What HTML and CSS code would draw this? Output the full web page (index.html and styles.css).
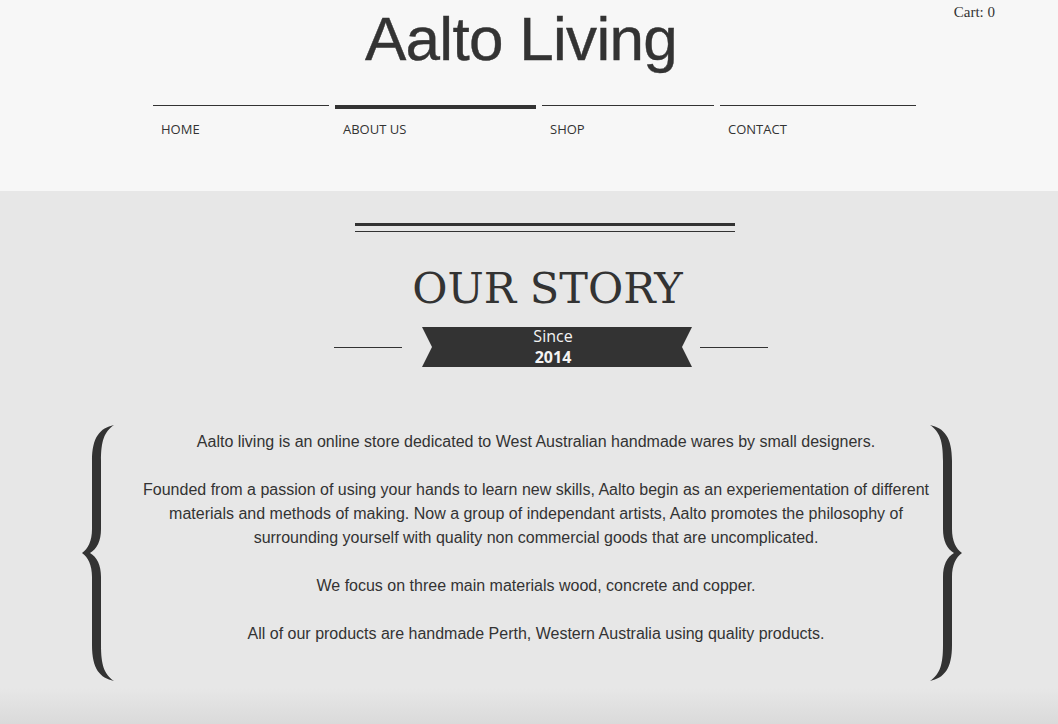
FILE: index.html
```html
<!DOCTYPE html>
<html lang="en">
<head>
<meta charset="utf-8">
<title>Aalto Living – Our Story</title>
<link rel="stylesheet" href="styles.css">
</head>
<body>
<header class="site-header">
  <div class="cart">Cart: 0</div>
  <h1 class="brand">Aalto Living</h1>
  <nav class="main-nav">
    <a class="nav-item nav-home" href="#">HOME</a>
    <a class="nav-item nav-about is-active" href="#">ABOUT US</a>
    <a class="nav-item nav-shop" href="#">SHOP</a>
    <a class="nav-item nav-contact" href="#">CONTACT</a>
  </nav>
</header>
<main class="story">
  <div class="double-rule"></div>
  <h2 class="story-title">OUR STORY</h2>
  <div class="ribbon-row">
    <span class="side-line"></span>
    <div class="ribbon">
      <span class="ribbon-since">Since</span>
      <span class="ribbon-year">2014</span>
    </div>
    <span class="side-line side-line-right"></span>
  </div>
  <div class="story-body">
    <svg class="brace" width="32" height="256" viewBox="0 0 32 256" aria-hidden="true">
      <path d="M32 0 C18 3 10 12 10 36 L10 104 C10 116 6 124 0 128 C6 132 10 140 10 152 L10 220 C10 244 18 253 32 256 C22 249 19 240 19 220 L19 152 C19 140 15 132 8 128 C15 124 19 116 19 104 L19 36 C19 16 22 7 32 0 Z" fill="#333"/>
    </svg>
    <div class="story-text">
      <p>Aalto living is an online store dedicated to West Australian handmade wares by small designers.</p>
      <p>Founded from a passion of using your hands to learn new skills, Aalto begin as an experiementation of different materials and methods of making. Now a group of independant artists, Aalto promotes the philosophy of surrounding yourself with quality non commercial goods that are uncomplicated.</p>
      <p>We focus on three main materials wood, concrete and copper.</p>
      <p>All of our products are handmade Perth, Western Australia using quality products.</p>
    </div>
    <svg class="brace brace-right" width="32" height="256" viewBox="0 0 32 256" aria-hidden="true">
      <g transform="translate(32 0) scale(-1 1)">
        <path d="M32 0 C18 3 10 12 10 36 L10 104 C10 116 6 124 0 128 C6 132 10 140 10 152 L10 220 C10 244 18 253 32 256 C22 249 19 240 19 220 L19 152 C19 140 15 132 8 128 C15 124 19 116 19 104 L19 36 C19 16 22 7 32 0 Z" fill="#333"/>
      </g>
    </svg>
  </div>
</main>
</body>
</html>
```
FILE: styles.css
```css
* { box-sizing: border-box; }

html, body {
  margin: 0;
  padding: 0;
}

body {
  background: #e7e7e7;
  color: #333;
  font-family: "Liberation Sans", Arial, sans-serif;
}

.site-header {
  position: relative;
  height: 191px;
  background: #f7f7f7;
  padding-top: 7px;
}

.cart {
  position: absolute;
  top: 5px;
  right: 63px;
  font-family: "Liberation Serif", "Times New Roman", serif;
  font-size: 15px;
  line-height: 15px;
  color: #333;
}

.brand {
  margin: 0 16px 0 0;
  height: 64px;
  text-align: center;
  font-family: "Liberation Sans", Arial, sans-serif;
  font-weight: normal;
  font-size: 62px;
  line-height: 64px;
  letter-spacing: -0.7px;
  color: #333;
  -webkit-text-stroke: 0.4px #333;
}

.main-nav {
  display: grid;
  grid-template-columns: 176px 201px 172px 196px;
  column-gap: 6px;
  margin-top: 34px;
  padding-left: 153px;
}

.nav-item {
  display: block;
  border-top: 1px solid #333;
  padding: 14px 0 0 8px;
  font-family: "Open Sans", sans-serif;
  font-size: 13px;
  line-height: 18px;
  color: #333;
  text-decoration: none;
}

.nav-item.is-active {
  border-top-width: 4px;
  padding-top: 11px;
}

.story {
  min-height: 533px;
  padding-top: 32px;
  background: linear-gradient(to bottom, #e7e7e7 0, #e7e7e7 calc(100% - 36px), #dadada 100%);
}

.double-rule {
  width: 380px;
  height: 9px;
  margin-left: 355px;
  border-top: 3px solid #333;
  border-bottom: 1px solid #333;
}

.story-title {
  margin: 34px 0 0 0;
  padding-left: 37px;
  text-align: center;
  font-family: "DejaVu Serif", serif;
  font-weight: normal;
  font-size: 43px;
  line-height: 44px;
  color: #333;
}

.ribbon-row {
  display: flex;
  align-items: center;
  margin-top: 17px;
  padding-left: 334px;
}

.side-line {
  width: 68px;
  height: 1px;
  background: #333;
  margin-right: 20px;
}

.side-line-right {
  margin-right: 0;
  margin-left: 8px;
}

.ribbon {
  width: 270px;
  height: 40px;
  background: #333;
  clip-path: polygon(0 0, 100% 0, calc(100% - 10px) 50%, 100% 100%, 0 100%, 10px 50%);
  display: flex;
  flex-direction: column;
  align-items: center;
  justify-content: center;
  padding-right: 8px;
  font-family: "Open Sans", sans-serif;
  font-size: 16px;
  line-height: 21px;
  color: #f4f4f4;
}

.ribbon-year {
  font-weight: bold;
}

.story-body {
  display: flex;
  align-items: flex-start;
  margin-top: 58px;
  padding-left: 82px;
}

.brace {
  flex: none;
  display: block;
}

.brace-right {
  margin-left: -6px;
}

.story-text {
  flex: none;
  width: 800px;
  margin-left: 22px;
  padding-top: 5px;
  text-align: center;
  font-size: 16px;
  line-height: 24px;
  color: #333;
}

.story-text p {
  margin: 0 0 24px 0;
}
```
